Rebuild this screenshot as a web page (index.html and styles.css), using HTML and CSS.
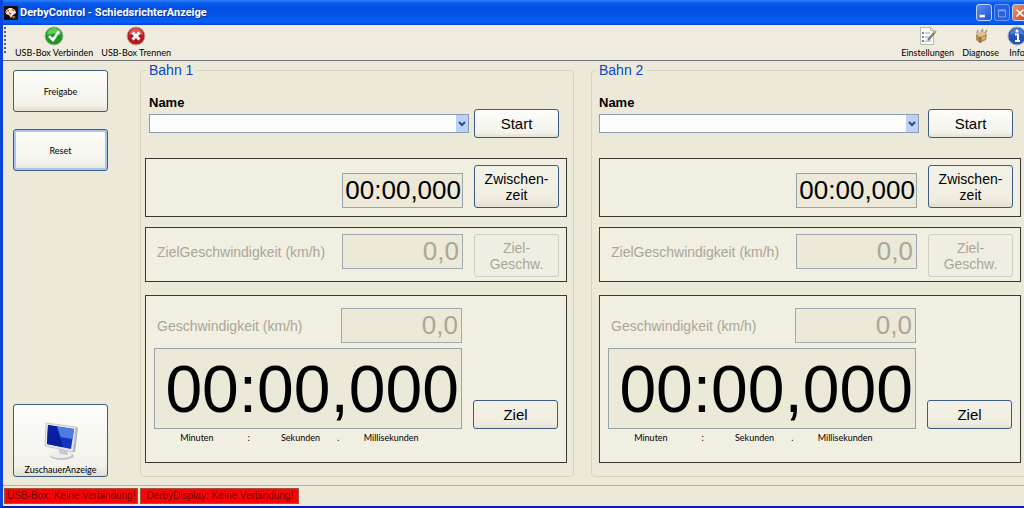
FILE: index.html
```html
<!DOCTYPE html>
<html lang="de">
<head>
<meta charset="utf-8">
<title>DerbyControl - SchiedsrichterAnzeige</title>
<link rel="stylesheet" href="styles.css">
</head>
<body>
<div class="window">
  <header class="titlebar">
    <svg class="app-icon" viewBox="0 0 14 14" aria-hidden="true">
      <rect width="14" height="14" fill="#100c10"/>
      <path d="M2 4l3-2 3 0 3 2 1 3-3 2-2 3-2-3-3-1z" fill="#f3e6d8"/>
      <path d="M3 4l2 1M8 3l2 2M5 7l2 1M1 6h2" stroke="#d0502c" stroke-width="1.4"/>
      <path d="M8 9l4 2-3 2z" fill="#c8602c"/>
    </svg>
    <h1 class="title">DerbyControl - SchiedsrichterAnzeige</h1>
    <button class="win-btn" aria-label="Minimieren"><svg viewBox="0 0 16 16"><rect x="3" y="10" width="6" height="3" fill="#fff"/></svg></button>
    <button class="win-btn win-btn-dim" aria-label="Maximieren"><svg viewBox="0 0 16 16"><path d="M4 4.5h8v8H4z M4 5.5h8" fill="none" stroke="#8fb0f4"/></svg></button>
    <button class="win-btn win-btn-close" aria-label="Schließen"><svg viewBox="0 0 16 16"><path d="M4 4l8 8M12 4l-8 8" stroke="#fff" stroke-width="2"/></svg></button>
  </header>

  <nav class="toolbar">
    <span class="grip"></span>
    <button class="tool">
      <svg viewBox="0 0 20 20" aria-hidden="true"><circle cx="10" cy="10" r="9" fill="#189820" stroke="#a8b0a0"/><path d="M3 9a7 7 0 0 1 14 0q-7-3-14 0z" fill="#62cc56"/><path d="M5 10l4 4 6-9" fill="none" stroke="#fff" stroke-width="2.6"/></svg>
      USB-Box Verbinden
    </button>
    <button class="tool">
      <svg viewBox="0 0 20 20" aria-hidden="true"><circle cx="10" cy="10" r="9" fill="#b81820" stroke="#c0a8a0"/><path d="M3 9a7 7 0 0 1 14 0q-7-3-14 0z" fill="#dc5a58"/><path d="M6.500 6.500l7 7M13.500 6.500l-7 7" stroke="#fff" stroke-width="3"/></svg>
      USB-Box Trennen
    </button>
    <span class="spacer"></span>
    <button class="tool">
      <svg viewBox="0 0 20 20" aria-hidden="true"><path d="M2.500 1.500h10l3 3v14h-13z" fill="#fbfbf8" stroke="#b8b8b4"/><path d="M12.500 1.500v3h3" fill="none" stroke="#b8b8b4"/><path d="M4 7h2M4 11h2M4 15h2" stroke="#7088b8" stroke-width="2"/><path d="M7 7h5M7 11h4M7 15h6" stroke="#a0a8b4"/><path d="M10 14l7-8" stroke="#77777a" stroke-width="2.200"/><path d="M16 7l2-2" stroke="#d8a048" stroke-width="2.400"/></svg>
      Einstellungen
    </button>
    <button class="tool">
      <svg viewBox="0 0 20 20" aria-hidden="true"><path d="M5 8l7-3 4 3-1 6-6 3-4-3z" fill="#b08a58"/><path d="M5 8l4 3 7-3-4-3z" fill="#dcc498"/><path d="M9 11v6" stroke="#75583a"/><path d="M6 7l1-3M10 6l2-3M14 7l2-3" stroke="#a89880" stroke-width="1.500"/><path d="M11 11l3-1v3l-3 1z" fill="#e0b060"/></svg>
      Diagnose
    </button>
    <button class="tool">
      <svg viewBox="0 0 20 20" aria-hidden="true"><circle cx="10" cy="10" r="9" fill="#2450b8" stroke="#a0acc8"/><path d="M3 9a7 7 0 0 1 14 0q-7-3-14 0z" fill="#4c7cd8"/><path d="M8 8.500h3V15M8 15h5" fill="none" stroke="#fff" stroke-width="2"/><circle cx="10" cy="5" r="1.500" fill="#fff"/></svg>
      Info
    </button>
  </nav>

  <main class="content">
    <aside class="sidebar">
      <button class="btn btn-small">Freigabe</button>
      <button class="btn btn-small btn-default">Reset</button>
      <button class="btn btn-small btn-display">
        <svg viewBox="0 0 36 38" aria-hidden="true">
          <ellipse cx="19" cy="34" rx="12" ry="4" fill="#c4c6c8"/><ellipse cx="18" cy="32.500" rx="11" ry="3.500" fill="#eeeeec"/>
          <path d="M15 25l9 1 1 7-8-1z" fill="#c8cacc"/>
          <path d="M33 5l2 1-3 24-3 0z" fill="#b0b4b8"/>
          <path d="M3 1l30 4-3 25-28-6z" fill="#e4e6e8" stroke="#c0c2c8" stroke-width=".8"/>
          <path d="M5 3l26 4-3 20-24-5z" fill="#1236c0"/>
          <path d="M5 3l9 1.400 6 20.800-16-3.200z" fill="#0820a0"/>
          <path d="M14 4.400l17 2.600-1.500 10-12 -2z" fill="#4c7ce4"/>
        </svg>
        ZuschauerAnzeige
      </button>
    </aside>

    <fieldset class="lane">
      <legend>Bahn 1</legend>
      <div class="starter">
        <label for="name1">Name</label>
        <select id="name1" class="combo"><option></option></select>
        <button class="btn">Start</button>
      </div>
      <section class="panel panel-split">
        <input class="value" aria-label="Zwischenzeit Bahn 1" value="00:00,000" readonly>
        <button class="btn btn-tall">Zwischen-<br>zeit</button>
      </section>
      <section class="panel panel-target">
        <label for="target1">ZielGeschwindigkeit (km/h)</label>
        <input id="target1" class="value" value="0,0" disabled>
        <button class="btn btn-tall" disabled>Ziel-<br>Geschw.</button>
      </section>
      <section class="panel panel-finish">
        <label for="speed1">Geschwindigkeit (km/h)</label>
        <input id="speed1" class="value" value="0,0" disabled>
        <input class="value value-big" aria-label="Zielzeit Bahn 1" value="00:00,000" readonly>
        <button class="btn">Ziel</button>
        <div class="units"><span>Minuten</span><span>:</span><span>Sekunden</span><span>.</span><span>Millisekunden</span></div>
      </section>
    </fieldset>

    <fieldset class="lane lane-second">
      <legend>Bahn 2</legend>
      <div class="starter">
        <label for="name2">Name</label>
        <select id="name2" class="combo"><option></option></select>
        <button class="btn">Start</button>
      </div>
      <section class="panel panel-split">
        <input class="value" aria-label="Zwischenzeit Bahn 2" value="00:00,000" readonly>
        <button class="btn btn-tall">Zwischen-<br>zeit</button>
      </section>
      <section class="panel panel-target">
        <label for="target2">ZielGeschwindigkeit (km/h)</label>
        <input id="target2" class="value" value="0,0" disabled>
        <button class="btn btn-tall" disabled>Ziel-<br>Geschw.</button>
      </section>
      <section class="panel panel-finish">
        <label for="speed2">Geschwindigkeit (km/h)</label>
        <input id="speed2" class="value" value="0,0" disabled>
        <input class="value value-big" aria-label="Zielzeit Bahn 2" value="00:00,000" readonly>
        <button class="btn">Ziel</button>
        <div class="units"><span>Minuten</span><span>:</span><span>Sekunden</span><span>.</span><span>Millisekunden</span></div>
      </section>
    </fieldset>
  </main>

  <footer class="statusbar">
    <span class="status">USB-Box: Keine Verbindung!</span>
    <span class="status status-display">DerbyDisplay: Keine Verbindung!</span>
  </footer>
</div>
</body>
</html>
```
FILE: styles.css
```css
* { box-sizing: border-box; }

body {
  margin: 0;
  font-family: "Liberation Sans", Arial, sans-serif;
  font-size: 14px;
  color: #000;
}

button, input, select {
  margin: 0;
  font: inherit;
  color: inherit;
}

.window {
  display: flex;
  flex-direction: column;
  min-height: 100vh;
  overflow: hidden;
  background: #ece9d8;
  border-left: 3px solid #0a46dc;
  border-bottom: 2px solid #0a20b4;
}

/* Title bar */
.titlebar {
  display: flex;
  align-items: center;
  gap: 2px;
  height: 25px;
  margin-left: -3px;
  margin-right: -4px;
  padding-left: 4px;
  background: linear-gradient(#2f80f8 0, #0a5cf0 3px, #0450e0 8px, #0458ec 17px, #0660fa 22px, #0344c8 25px);
}
.app-icon { width: 14px; height: 14px; }
.title {
  flex: 1;
  margin: 0;
  font-family: Roboto, sans-serif;
  font-size: 11px;
  line-height: 16px;
  color: #fff;
  text-shadow: 1px 1px #0a3494;
}
.win-btn {
  width: 16px;
  height: 17px;
  padding: 0;
  border: 1px solid #c4d4fc;
  border-radius: 3px;
  background: linear-gradient(135deg, #5c8cf8, #1c50d8);
}
.win-btn svg { display: block; width: 14px; height: 14px; }
.win-btn-dim { border-color: #7098f0; background: #2360e4; }
.win-btn-close { background: linear-gradient(135deg, #f09070, #d04820); }

/* Toolbar */
.toolbar {
  display: flex;
  align-items: flex-start;
  height: 36px;
  margin-right: -8px;
  padding: 1px 1px 0 1px;
  background: #efecdf;
  border-bottom: 1px solid #74747c;
}
.grip {
  width: 2px;
  height: 28px;
  margin-top: 1px;
  margin-right: 5px;
  background: repeating-linear-gradient(#5c5c70 0 2px, transparent 2px 4px);
}
.spacer { flex: 1; }
.tool {
  display: flex;
  flex-direction: column;
  align-items: center;
  gap: 1px;
  padding: 0 4px;
  border: 0;
  background: none;
  font-family: Lato, sans-serif;
  font-size: 9px;
  line-height: 11px;
  white-space: nowrap;
}
.tool svg { width: 20px; height: 20px; }

/* Work area */
.content {
  flex: 1;
  display: grid;
  grid-template-columns: 95px minmax(0, 466fr) minmax(0, 454fr);
  margin-right: -4px;
  padding: 1px 0 8px 10px;
  background: #ece9d8;
}
.sidebar {
  display: flex;
  flex-direction: column;
  gap: 17px;
  padding-top: 8px;
}
.btn {
  width: 85px;
  height: 29px;
  padding: 0;
  border: 1px solid #3c5c84;
  border-radius: 3px;
  background: linear-gradient(#fdfdfb, #f3f2ea 85%, #e2dfd2);
  font-size: 15px;
  line-height: 16px;
}
.btn-tall { height: 43px; font-size: 14px; }
.panel .btn { background: linear-gradient(#f4f2e8, #efecdf 85%, #e2dfd0); }
.panel .btn:disabled { border-color: #d0cdbe; background: #f0eee2; color: #aaa797; }
.btn-small {
  width: 95px;
  height: 42px;
  font-family: Lato, sans-serif;
  font-size: 9px;
  line-height: 11px;
}
.btn-default { box-shadow: inset 0 0 0 2px #a8c4f0; }
.btn-display {
  display: flex;
  flex-direction: column;
  align-items: center;
  justify-content: flex-end;
  gap: 4px;
  height: 73px;
  margin-top: auto;
  padding-bottom: 1px;
}
.btn-display svg { width: 36px; height: 38px; }

/* Lanes */
.lane {
  min-width: 0;
  margin: 0 0 0 32px;
  padding: 0 6px 0 4px;
  border: 1px solid #d6d3c2;
  border-radius: 4px;
}
.lane-second { margin-left: 17px; padding-left: 7px; }
.lane legend {
  padding: 0 3px;
  margin-left: 1px;
  line-height: 16px;
  color: #0c46c4;
}
.lane-second legend { margin-left: -3px; }
.starter {
  display: grid;
  grid-template-columns: minmax(0, 1fr) 85px;
  column-gap: 5px;
  align-items: center;
  padding: 17px 8px 0 4px;
}
.lane-second .starter { column-gap: 9px; padding-left: 0; }
.starter label {
  grid-column: 1 / -1;
  font-size: 13px;
  font-weight: bold;
  line-height: 16px;
  margin-bottom: -2px;
}
.combo {
  width: 100%;
  height: 19px;
  appearance: none;
  border: 1px solid #8a9cb4;
  border-radius: 0;
  background: #fcfdfc url("data:image/svg+xml,%3Csvg xmlns='http://www.w3.org/2000/svg' width='12' height='17'%3E%3Crect width='12' height='17' fill='%23bcd0f8'/%3E%3Cpath d='M3 7l3 3 3-3' fill='none' stroke='%23304c80' stroke-width='2'/%3E%3C/svg%3E") right center no-repeat;
}

.panel {
  display: grid;
  grid-template-columns: minmax(0, 1fr) 121px 85px;
  column-gap: 11px;
  align-items: start;
  padding: 6px 7px 6px 8px;
  border: 1px solid #3a3834;
  background: #f1eee2;
}
.panel label {
  padding-left: 3px;
  line-height: 36px;
  color: #aaa797;
  white-space: nowrap;
}
.panel-split { margin-top: 20px; padding-bottom: 8px; }
.panel-split .value { grid-column: 2; align-self: end; }
.panel-target { margin-top: 10px; padding-bottom: 4px; }
.panel-finish { margin-top: 13px; padding: 12px 8px 20px; row-gap: 4px; }

.value {
  width: 100%;
  height: 35px;
  padding: 0 1px;
  border: 1px solid #98a4ac;
  border-radius: 0;
  background: #ece9d8;
  font-size: 26px;
  text-align: right;
}
.value:disabled { padding-right: 3px; color: #aaa797; border-color: #a0a8b4; }
.value-big {
  grid-column: 1 / 3;
  height: 81px;
  padding-right: 2px;
  font-size: 66px;
}
.panel-finish .btn { align-self: end; }
.units {
  grid-column: 1 / 3;
  display: grid;
  grid-template-columns: 66fr 38fr 66fr 10fr 96fr;
  padding: 0 23px 0 10px;
  font-family: Lato, sans-serif;
  font-size: 9px;
  line-height: 9px;
  text-align: center;
}

/* Status bar */
.statusbar {
  display: flex;
  gap: 2px;
  height: 21px;
  padding: 2px 1px;
  border-top: 1px solid #b4b1a2;
}
.status {
  padding: 0 2px;
  border: 1px solid #a85040;
  background: #fb0204;
  color: #6c0808;
  font-size: 10px;
  line-height: 14px;
  white-space: nowrap;
}
.status-display { padding: 0 5px; }
```
